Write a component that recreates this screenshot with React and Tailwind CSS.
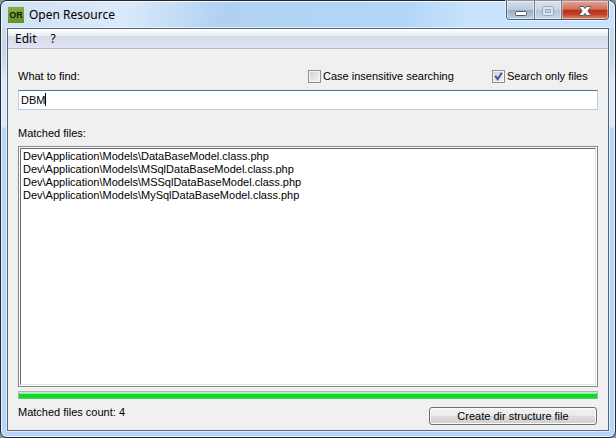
import { useState } from "react";

const FILES = [
  "Dev\\Application\\Models\\DataBaseModel.class.php",
  "Dev\\Application\\Models\\MSqlDataBaseModel.class.php",
  "Dev\\Application\\Models\\MSSqlDataBaseModel.class.php",
  "Dev\\Application\\Models\\MySqlDataBaseModel.class.php",
];

function TitleBar() {
  return (
    <header className="mx-px flex h-[27px] items-start rounded-t-[6px] border-t border-[#f4faff] bg-[linear-gradient(100deg,#d0e1f3_0%,#dbeafa_20%,#b0d1f2_36%,#b3d6f8_66%,#c8e3fc_76%,#c8e3fd_100%)] pl-[6px] pr-[5px]">
      <div className="mt-[5px] flex h-4 w-4 items-center justify-center bg-linear-to-b from-[#86ad45] to-[#669024] font-['Liberation_Sans',sans-serif] text-[9px] font-bold leading-none text-[#14200a]">
        OR
      </div>
      <h1 className="ml-[5px] mt-[5px] flex-1 font-['Noto_Sans',sans-serif] text-[12px] leading-4 text-black">
        Open Resource
      </h1>
      <div className="-mt-px flex h-[19px] overflow-hidden rounded-b-[4px] border border-t-0 border-[#4e5d70] shadow-[0_0_0_1px_#ffffff80]">
        <button
          type="button"
          aria-label="Minimize"
          className="flex w-[28px] items-center justify-center border-r border-[#66778a] bg-[linear-gradient(#d3dee9_0%,#bccbdb_48%,#98adc3_50%,#b9cee3_100%)] shadow-[inset_0_0_0_1px_#ffffff80]"
        >
          <svg width="14" height="14" viewBox="0 0 14 14" className="shrink-0">
            <rect x="1.500" y="8.500" width="11" height="4" rx="1" fill="#fff" stroke="#535666" />
          </svg>
        </button>
        <button
          type="button"
          aria-label="Maximize"
          disabled
          className="flex w-[27px] items-center justify-center border-r border-[#66778a] bg-[linear-gradient(#d6e1ec_0%,#c9d6e3_48%,#b4c5d7_50%,#c4d8ea_100%)] shadow-[inset_0_0_0_1px_#ffffff80]"
        >
          <svg width="14" height="14" viewBox="0 0 14 14" fill="none" className="shrink-0">
            <rect x="1.500" y="3.500" width="11" height="9" rx="1" fill="#dbe5ee" stroke="#98a8b8" />
            <rect x="4.500" y="6.500" width="5" height="3" fill="#c5d3e0" stroke="#98a8b8" />
          </svg>
        </button>
        <button
          type="button"
          aria-label="Close"
          className="flex w-[46px] items-center justify-center bg-[linear-gradient(#e3a596_0%,#d0705b_46%,#b83018_50%,#c5432a_75%,#e08a68_100%)] shadow-[inset_0_0_0_1px_#ffffff66]"
        >
          <svg width="14" height="14" viewBox="0 0 14 14" className="shrink-0">
            <path
              d="M1.500 3.500H5.300L7 5.500L8.700 3.500H12.500V4.500L9.800 8L12.500 11.500V12.500H8.700L7 10.500L5.300 12.500H1.500V11.500L4.200 8L1.500 4.500Z"
              fill="#fff"
              stroke="#535666"
              strokeLinejoin="round"
            />
          </svg>
        </button>
      </div>
    </header>
  );
}

function CheckOption({ id, label, checked, onChange, className }) {
  return (
    <div className={"flex items-center " + className}>
      <span className="relative flex h-[13px] w-[13px]">
        <input
          id={id}
          type="checkbox"
          checked={checked}
          onChange={onChange}
          className="h-[13px] w-[13px] appearance-none border border-[#8e8f8f] bg-linear-to-br from-[#cbcfd5] to-[#f6f6f6] shadow-[inset_0_0_0_1px_#f4f4f4]"
        />
        {checked && (
          <svg
            width="13"
            height="13"
            viewBox="0 0 13 13"
            className="pointer-events-none absolute inset-0"
            fill="none"
            stroke="#41579c"
            strokeWidth="2"
          >
            <path d="M3.200 5.800L5.700 9.200L9.800 2.800" />
          </svg>
        )}
      </span>
      <label htmlFor={id} className="ml-[2px]">
        {label}
      </label>
    </div>
  );
}

export default function App() {
  const [query, setQuery] = useState("DBM");
  const [insensitive, setInsensitive] = useState(false);
  const [onlyFiles, setOnlyFiles] = useState(true);

  return (
    <div className="flex min-h-screen bg-[#8d9299]">
      <div className="flex flex-1 flex-col rounded-[7px] border border-[#23262e] bg-[linear-gradient(#cfe1f2_0px,#c3d6e6_50px,#d9eafa_80px,#d9eafa_126px,#b5d7f8_127px,#b3d6fa_100%)] shadow-[inset_0_0_0_1px_#eef7ff]">
        <TitleBar />
        <div className="mx-[6px] mb-[6px] flex flex-1 flex-col border border-[#5a6675] bg-[#f0f0f0] shadow-[0_0_0_1px_#dff0ff]">
          <nav className="flex h-[20px] gap-[14px] border-b border-[#b2bbd0] bg-[linear-gradient(#ffffff_0%,#e9edf5_36%,#d5daeb_38%,#e1e6f6_100%)] pl-[7px] font-['Noto_Sans',sans-serif] text-[12px] leading-[20px] text-black">
            <button type="button">Edit</button>
            <button type="button">?</button>
          </nav>
          <main className="flex flex-1 flex-col px-[10px] pb-[5px] pt-[20px] font-['Liberation_Sans',Arial,sans-serif] text-[11px] leading-[15px] text-black">
            <div className="flex items-center">
              <label htmlFor="query" className="flex-1">
                What to find:
              </label>
              <CheckOption
                id="insensitive"
                label="Case insensitive searching"
                checked={insensitive}
                onChange={() => setInsensitive(!insensitive)}
                className="w-[184px]"
              />
              <CheckOption
                id="only-files"
                label="Search only files"
                checked={onlyFiles}
                onChange={() => setOnlyFiles(!onlyFiles)}
                className="w-[106px]"
              />
            </div>
            <div className="relative mt-[6px] flex">
              <input
                id="query"
                type="text"
                value={query}
                onChange={(e) => setQuery(e.target.value)}
                className="h-[20px] w-full rounded-[1px] border border-[#b5cfe7] border-t-[#3d7bad] bg-white px-[2px] outline-none"
              />
              <span className="absolute left-[27px] top-[3px] h-[13px] w-px bg-black" />
            </div>
            <label htmlFor="matches" className="mt-[16px]">
              Matched files:
            </label>
            <div className="mt-[5px] flex flex-1 border border-[#828790] bg-white p-px">
              <select
                id="matches"
                size={4}
                className="flex-1 appearance-none overflow-y-auto border border-[#e3e3e3] border-l-[#696969] border-t-[#696969] bg-white pt-px outline-none"
              >
                {FILES.map((file) => (
                  <option key={file} className="h-[13px] min-h-0 px-[2px] py-0 leading-[13px]">
                    {file}
                  </option>
                ))}
              </select>
            </div>
            <div
              role="progressbar"
              aria-label="Search progress"
              aria-valuenow={100}
              className="mt-[4px] h-[8px] border border-[#b2b2b2] border-b-[#5fc46c] bg-[linear-gradient(#c9f5ce_0%,#8eeb99_32%,#06d625_36%,#12e032_100%)]"
            />
            <div className="mt-[6px] flex items-start">
              <p className="flex-1">Matched files count: {FILES.length}</p>
              <button
                type="button"
                className="mr-px mt-[2px] h-[18px] w-[168px] rounded-[3px] border border-[#707070] bg-[linear-gradient(#f2f2f2_0%,#ebebeb_50%,#dddddd_52%,#cfcfcf_100%)] leading-[16px] shadow-[inset_0_0_0_1px_#fbfbfb]"
              >
                Create dir structure file
              </button>
            </div>
          </main>
        </div>
      </div>
    </div>
  );
}
